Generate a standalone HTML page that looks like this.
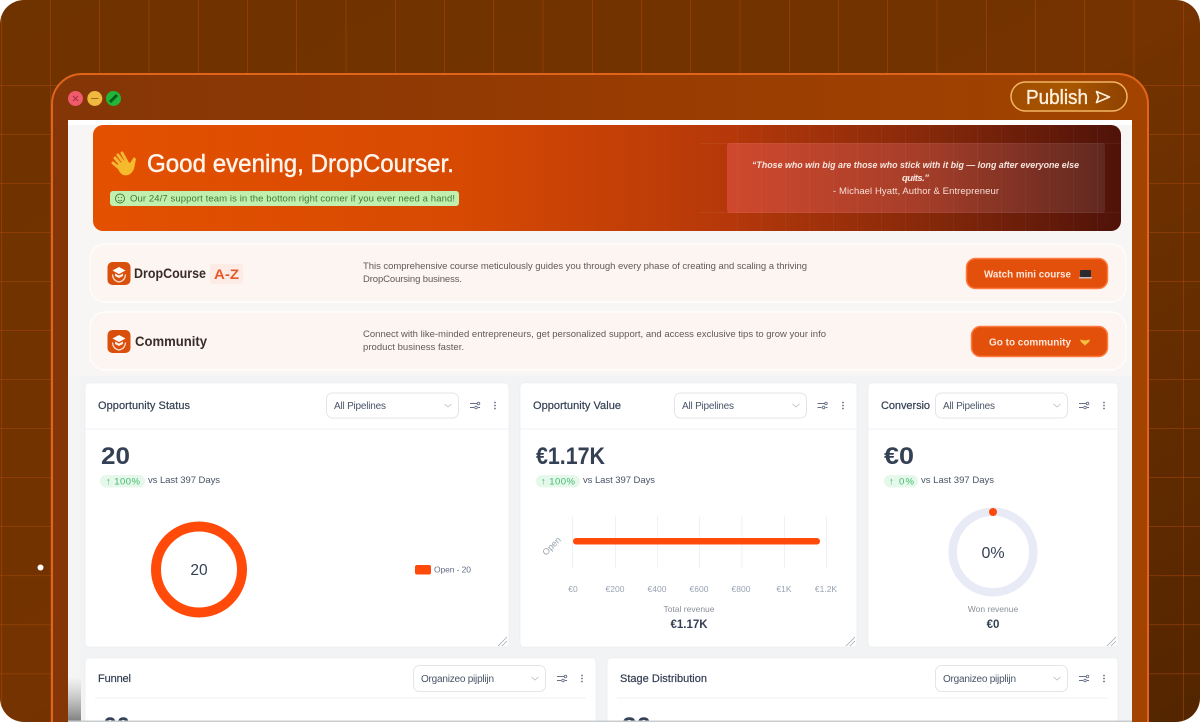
<!DOCTYPE html>
<html lang="en"><head><meta charset="utf-8"><title>Dashboard</title>
<style>
html,body{margin:0;padding:0;background:#fff;width:1200px;height:722px;overflow:hidden}
svg{display:block;filter:blur(.35px)}
text{font-family:"Liberation Sans",sans-serif}
</style></head><body>
<svg xmlns="http://www.w3.org/2000/svg" width="1200" height="722" viewBox="0 0 1200 722">
<defs>
<linearGradient id="bg" x1="0" y1="0" x2="1" y2="1"><stop offset="0" stop-color="#6f3300"/><stop offset=".5" stop-color="#743300"/><stop offset="1" stop-color="#532500"/></linearGradient>
<linearGradient id="win" x1="0" y1="0" x2="1" y2="0"><stop offset="0" stop-color="#843606"/><stop offset=".5" stop-color="#973b02"/><stop offset="1" stop-color="#a24400"/></linearGradient>
<linearGradient id="hero" x1="0" y1="0" x2="1" y2="0"><stop offset="0" stop-color="#e35000"/><stop offset=".35" stop-color="#d84a02"/><stop offset=".62" stop-color="#b5380a"/><stop offset=".82" stop-color="#84280a"/><stop offset="1" stop-color="#4f1209"/></linearGradient>
<linearGradient id="quote" x1="0" y1="0" x2="1" y2="0"><stop offset="0" stop-color="#d24a30"/><stop offset=".5" stop-color="#a9402c"/><stop offset="1" stop-color="#622a22"/></linearGradient>
<linearGradient id="pub" x1="0" y1="0" x2="1" y2="0"><stop offset="0" stop-color="#a04c00"/><stop offset=".5" stop-color="#a85600"/><stop offset="1" stop-color="#8f4200"/></linearGradient>
<linearGradient id="fade" x1="0" y1="0" x2="0" y2="1"><stop offset="0" stop-color="#8a8a8a" stop-opacity="0"/><stop offset="1" stop-color="#555" stop-opacity=".75"/></linearGradient>
<pattern id="gv" x="1" y="0" width="49.25" height="100" patternUnits="userSpaceOnUse"><path d="M0 0V100" fill="none" stroke="#a8480a" stroke-width="1"/></pattern>
<pattern id="gh" x="0" y="36" width="100" height="49.05" patternUnits="userSpaceOnUse"><path d="M0 0H100" fill="none" stroke="#a8480a" stroke-width="1"/></pattern>
<pattern id="hgrid" x="737" y="125" width="24" height="200" patternUnits="userSpaceOnUse"><path d="M0 0V200" stroke="#fff" stroke-opacity=".07" stroke-width="1"/></pattern>
<clipPath id="hc"><rect x="93" y="125" width="1028" height="106" rx="10"/></clipPath>
<clipPath id="page"><rect width="1200" height="722" rx="24"/></clipPath>
<g id="sl" fill="none" stroke="#667085" stroke-width=".9"><path d="M-5 -2H2M-5 2H-1M3 2H5"/><circle cx="3.500" cy="-2" r="1.300"/><circle cx="1" cy="2" r="1.300"/></g>
<g id="dots" fill="#667085"><circle cy="-3" r=".9"/><circle r=".9"/><circle cy="3" r=".9"/></g>
<path id="chev" d="M-3.500 -1.500L0 1.500L3.500 -1.500" fill="none" stroke="#b5bac3" stroke-width=".8"/>
<path id="rs" d="M-5 5L4 -4M-1 5L4 0" stroke="#98a2b3" stroke-width=".7" fill="none"/>
<g id="cap"><rect width="23" height="23" rx="5" fill="#d9500c"/><path d="M11.500 5L18 8.500L11.500 12L5 8.500Z" fill="#fff"/><path d="M7.500 11.500V14L11.500 16L15.500 14V11.500L11.500 13.500Z" fill="#fff" fill-opacity=".9"/><path d="M5 12.500Q5.500 19 11.500 20Q17.500 19 18 12.500" fill="none" stroke="#fff" stroke-opacity=".8" stroke-width="1.300"/></g>
</defs>

<g clip-path="url(#page)">
<rect width="1200" height="722" fill="url(#bg)"/>
<rect width="1200" height="722" fill="url(#gv)"/>
<rect y="70" width="1200" height="652" fill="url(#gh)"/>
<circle cx="40.500" cy="567.500" r="3" fill="#fff"/>

<!-- window -->
<path d="M52 722V104A30 30 0 0 1 82 74H1118A30 30 0 0 1 1148 104V722" fill="url(#win)" stroke="#e0641c" stroke-width="2"/>
<circle cx="75.500" cy="98.500" r="7.500" fill="#ef5a6c"/>
<path d="M73 96L78 101M78 96L73 101" stroke="#a8323c" stroke-width="1"/>
<circle cx="94.800" cy="98.500" r="7.500" fill="#efb83e"/>
<path d="M91 98.500H98.500" stroke="#9b6f18" stroke-width="1"/>
<circle cx="113.500" cy="98.500" r="7.500" fill="#21b53a"/>
<path d="M110 102L117 95" stroke="#0b5c18" stroke-width="3"/>
<rect x="1011" y="82" width="116" height="29" rx="14.500" fill="url(#pub)" stroke="#f3b565" stroke-width="1.500"/>
<text x="1026" y="104" font-size="20" fill="#fff1de" stroke="#fff1de" stroke-width=".35" textLength="62" lengthAdjust="spacingAndGlyphs">Publish</text>
<path d="M1096.500 91.500L1109.500 97L1096.500 102.500L1098.500 97Z" fill="none" stroke="#fff1de" stroke-width="1.700" stroke-linejoin="round"/>

<!-- content -->
<rect x="68" y="120" width="1064" height="602" fill="#f8f6f4"/>
<rect x="68" y="120" width="1064" height="5" fill="#fff"/>
<rect x="80" y="376" width="1052" height="346" fill="#f1f3f4"/>
<rect x="68" y="376" width="12" height="346" fill="#f5f5f5"/>
<rect x="68" y="677" width="13" height="45" fill="url(#fade)"/>

<!-- hero -->
<rect x="93" y="125" width="1028" height="106" rx="10" fill="url(#hero)"/>
<rect x="727" y="143" width="378" height="70" rx="3" fill="url(#quote)" opacity=".92"/>
<g clip-path="url(#hc)">
<rect x="720" y="125" width="401" height="106" fill="url(#hgrid)"/>
<path d="M700 143.500H1121M700 212.500H1121" stroke="#fff" stroke-opacity=".05"/>
</g>
<!-- wave -->
<g transform="translate(112 152)">
<path d="M3 6L9 13M6 3L12 11M10 1L15 10M1 11L7 16" stroke="#f2b632" stroke-width="3" stroke-linecap="round"/>
<path d="M5 13L13 8L18 11L22 5L24 7L22 17Q18 25 11 23Q6 20 5 13Z" fill="#f5bb2c"/>
</g>
<text x="147" y="172" font-size="25" fill="#fff5ec" stroke="#fff5ec" stroke-width=".45" textLength="307" lengthAdjust="spacingAndGlyphs">Good evening, DropCourser.</text>
<rect x="110" y="191" width="349" height="15" rx="3" fill="#c1efae"/>
<circle cx="120" cy="198.500" r="4.500" fill="none" stroke="#3f7a35" stroke-width=".9"/>
<path d="M118 200Q120 202 122 200" fill="none" stroke="#3f7a35" stroke-width=".7"/><circle cx="118.500" cy="197.500" r=".6" fill="#3f7a35"/><circle cx="121.500" cy="197.500" r=".6" fill="#3f7a35"/>
<text x="130" y="201.500" font-size="9.500" fill="#3f7a35" textLength="325">Our 24/7 support team is in the bottom right corner if you ever need a hand!</text>
<text x="752" y="168" font-size="9.500" font-style="italic" font-weight="bold" fill="#f8e6df" textLength="327" lengthAdjust="spacingAndGlyphs">“Those who win big are those who stick with it big — long after everyone else</text>
<text x="902" y="181" font-size="9.500" font-style="italic" font-weight="bold" fill="#f8e6df" textLength="27">quits.”</text>
<text x="833" y="194" font-size="9.500" fill="#f8dfd6" textLength="166">-  Michael Hyatt, Author &amp; Entrepreneur</text>

<!-- rows -->
<rect x="90" y="244" width="1036" height="58" rx="15" fill="#fdf5f1" stroke="#fffdfc" stroke-width="1.500"/>
<rect x="90" y="312" width="1036" height="58" rx="15" fill="#fdf5f1" stroke="#fffdfc" stroke-width="1.500"/>
<use href="#cap" x="107.500" y="262"/>
<text x="134" y="278" font-size="14" font-weight="bold" fill="#3b2b26" textLength="72" lengthAdjust="spacingAndGlyphs">DropCourse</text>
<rect x="210" y="264" width="33" height="20" rx="3" fill="#fdece5"/>
<text x="214" y="279" font-size="14" font-weight="bold" fill="#e8572a" textLength="25" lengthAdjust="spacingAndGlyphs">A-Z</text>
<use href="#cap" x="107.500" y="330"/>
<text x="135" y="346" font-size="14" font-weight="bold" fill="#3b2b26" textLength="72" lengthAdjust="spacingAndGlyphs">Community</text>
<text x="363" y="269" font-size="9.500" fill="#5f5a58" textLength="444">This comprehensive course meticulously guides you through every phase of creating and scaling a thriving</text>
<text x="363" y="282" font-size="9.500" fill="#5f5a58" textLength="99">DropCoursing business.</text>
<text x="363" y="337" font-size="9.500" fill="#5f5a58" textLength="463">Connect with like-minded entrepreneurs, get personalized support, and access exclusive tips to grow your info</text>
<text x="363" y="350" font-size="9.500" fill="#5f5a58" textLength="101">product business faster.</text>
<rect x="966.500" y="258.500" width="141" height="30" rx="9" fill="#e2500c" stroke="#ff7b40" stroke-width="1.500"/>
<text x="984" y="277.500" font-size="10" font-weight="bold" fill="#ffe6da" textLength="87" lengthAdjust="spacingAndGlyphs">Watch mini course</text>
<rect x="1080" y="270" width="11" height="7" rx="1" fill="#2c2a2e"/><rect x="1079" y="277" width="13" height="1.500" fill="#bfc1c6"/>
<rect x="971.500" y="326.500" width="136" height="30" rx="9" fill="#e2500c" stroke="#ff7b40" stroke-width="1.500"/>
<text x="989" y="345.500" font-size="10" font-weight="bold" fill="#ffe6da" textLength="82" lengthAdjust="spacingAndGlyphs">Go to community</text>
<path d="M1080 339.500L1085 340.500L1090 339.500L1089 342L1085 345.500L1081 342Z" fill="#f2bf3e"/>

<!-- cards -->
<g fill="#fff" stroke="#e8eaed" stroke-width=".6">
<rect x="85" y="383" width="424" height="264" rx="4"/>
<rect x="520" y="383" width="337" height="264" rx="4"/>
<rect x="868" y="383" width="250" height="264" rx="4"/>
<path d="M85 722V662A4 4 0 0 1 89 658H592A4 4 0 0 1 596 662V722Z"/>
<path d="M607 722V662A4 4 0 0 1 611 658H1114A4 4 0 0 1 1118 662V722Z"/>
</g>
<g stroke="#f1f2f4" stroke-width="1">
<path d="M85 429H509M520 429H857M868 429H1118M95 698H586M617 698H1108"/>
</g>
<!-- titles -->
<g font-size="11" fill="#344054" stroke="#344054" stroke-width=".2">
<text x="98" y="409" textLength="92">Opportunity Status</text>
<text x="533" y="409" textLength="88">Opportunity Value</text>
<text x="881" y="409" textLength="49">Conversio</text>
<text x="98" y="682" textLength="33">Funnel</text>
<text x="620" y="682" textLength="87">Stage Distribution</text>
</g>
<!-- selects -->
<g fill="#fff" stroke="#e3e5e9" stroke-width="1">
<rect x="326.500" y="393" width="132" height="25" rx="6"/>
<rect x="674.500" y="393" width="132" height="25" rx="6"/>
<rect x="935.500" y="393" width="132" height="25" rx="6"/>
<rect x="413.500" y="665.500" width="132" height="26" rx="6"/>
<rect x="935.500" y="665.500" width="132" height="26" rx="6"/>
</g>
<g font-size="10" fill="#475467">
<text x="334" y="409" textLength="52">All Pipelines</text>
<text x="682" y="409" textLength="52">All Pipelines</text>
<text x="943" y="409" textLength="52">All Pipelines</text>
<text x="421" y="682" textLength="73">Organizeo pijplijn</text>
<text x="943" y="682" textLength="73">Organizeo pijplijn</text>
</g>
<use href="#chev" x="448" y="405.500"/><use href="#chev" x="796" y="405.500"/><use href="#chev" x="1057" y="405.500"/><use href="#chev" x="535" y="678.500"/><use href="#chev" x="1057" y="678.500"/>
<use href="#sl" x="475" y="405.500"/><use href="#sl" x="822.500" y="405.500"/><use href="#sl" x="1084" y="405.500"/><use href="#sl" x="562" y="678.500"/><use href="#sl" x="1084" y="678.500"/>
<use href="#dots" x="495" y="405.500"/><use href="#dots" x="843" y="405.500"/><use href="#dots" x="1104" y="405.500"/><use href="#dots" x="582" y="678.500"/><use href="#dots" x="1104" y="678.500"/>
<!-- numbers -->
<g font-size="24" font-weight="bold" fill="#344054">
<text x="101" y="464" textLength="29" lengthAdjust="spacingAndGlyphs">20</text>
<text x="536" y="464" textLength="69" lengthAdjust="spacingAndGlyphs">€1.17K</text>
<text x="884" y="464" textLength="30" lengthAdjust="spacingAndGlyphs">€0</text>
<text x="103" y="734" textLength="27" lengthAdjust="spacingAndGlyphs">60</text>
<text x="622" y="734" textLength="29" lengthAdjust="spacingAndGlyphs">20</text>
</g>
<!-- badges -->
<rect x="100" y="475" width="45" height="12.500" rx="6" fill="#e5f8eb"/>
<rect x="536" y="475" width="44" height="12.500" rx="6" fill="#e5f8eb"/>
<rect x="884" y="475" width="34" height="12.500" rx="6" fill="#e5f8eb"/>
<g font-size="9.500" fill="#3fba6a">
<text x="106" y="484.500" textLength="34">↑ 100%</text>
<text x="541" y="484.500" textLength="34">↑ 100%</text>
<text x="889" y="484.500" textLength="25">↑ 0%</text>
</g>
<g font-size="9.500" fill="#475467">
<text x="148" y="483" textLength="72">vs Last 397 Days</text>
<text x="583" y="483" textLength="72">vs Last 397 Days</text>
<text x="921" y="483" textLength="73">vs Last 397 Days</text>
</g>
<!-- donut -->
<circle cx="199" cy="569.500" r="43" fill="none" stroke="#ff4a0a" stroke-width="10"/>
<text x="199" y="575" font-size="15.500" fill="#344054" text-anchor="middle">20</text>
<rect x="415" y="565" width="16" height="9.500" rx="2" fill="#ff4a0a"/>
<text x="434" y="572.500" font-size="8.500" fill="#667085" textLength="37">Open - 20</text>
<!-- bar chart -->
<path d="M572.500 516V568M615.500 516V568M657.500 516V568M699.500 516V568M742 516V568M784.500 516V568M826.500 516V568" stroke="#eceef1" stroke-width=".8"/>
<rect x="573" y="538" width="247" height="6.500" rx="3.200" fill="#ff4a0a"/>
<text transform="translate(546 556) rotate(-45)" font-size="9" fill="#98a2b3">Open</text>
<g font-size="8.500" fill="#98a2b3" text-anchor="middle">
<text x="573" y="592">€0</text><text x="615" y="592">€200</text><text x="657" y="592">€400</text><text x="699" y="592">€600</text><text x="741" y="592">€800</text><text x="784" y="592">€1K</text><text x="826" y="592">€1.2K</text>
</g>
<text x="689" y="612" font-size="8.500" fill="#8a8f98" text-anchor="middle">Total revenue</text>
<text x="689" y="628" font-size="11.500" font-weight="bold" fill="#344054" text-anchor="middle">€1.17K</text>
<!-- ring -->
<circle cx="993" cy="552" r="40.300" fill="none" stroke="#e8ebf6" stroke-width="8.500"/>
<circle cx="993" cy="512" r="4" fill="#ff4a0a"/>
<text x="993" y="558" font-size="16" fill="#344054" text-anchor="middle">0%</text>
<text x="993" y="612" font-size="8.500" fill="#8a8f98" text-anchor="middle">Won revenue</text>
<text x="993" y="628" font-size="11.500" font-weight="bold" fill="#344054" text-anchor="middle">€0</text>
<use href="#rs" x="503" y="641"/><use href="#rs" x="851" y="641"/><use href="#rs" x="1112" y="641"/>
<rect x="68" y="720.500" width="1064" height="1.500" fill="#c9cccf"/>
</g>
</svg>
</body></html>
